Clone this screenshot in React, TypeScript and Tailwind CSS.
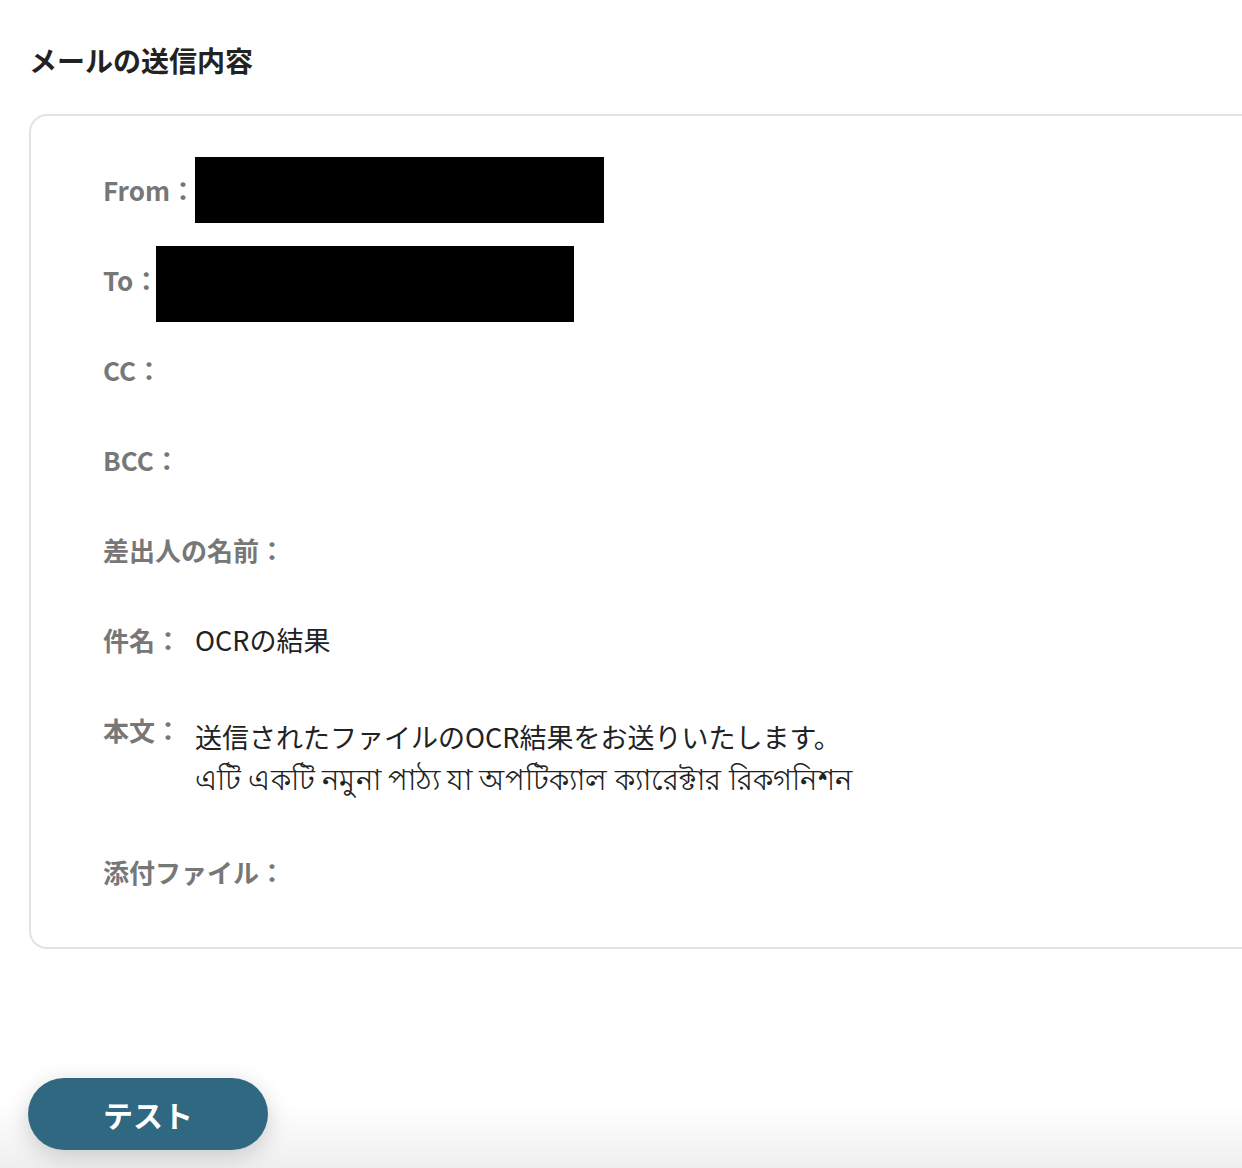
import React from "react";

const labelCls = "text-[26px] leading-[40px] font-semibold text-[#777777] whitespace-nowrap";
const valueCls = "text-[27px] leading-[40px] text-[#222222]";

function Row({ label, children }: { label: string; children?: React.ReactNode }) {
    return (
        <div className="flex h-[40px] items-center">
            <span className={labelCls}>{label}</span>
            {children}
        </div>
    );
}

export default function App() {
    return (
        <div
            className="flex h-[1168px] w-full flex-col overflow-hidden bg-white"
            style={{ fontFamily: '"Noto Sans CJK JP", "Noto Sans", sans-serif' }}
        >
            <div className="pl-[29px] pt-[40px]">
                <h2 className="text-[28px] leading-[40px] font-bold text-[#222222]">メールの送信内容</h2>

                <div className="mt-[34px] mr-[-60px] rounded-[18px] border-2 border-[#e3e3e3] pb-[55px] pl-[72px] pt-[54px]">
                    <div className="flex flex-col gap-[50px]">
                        <Row label="From：">
                            <span className="ml-[-1px] block h-[66px] w-[409px] bg-black" />
                        </Row>
                        <Row label="To：">
                            <span className="ml-[-3px] mt-[8px] block h-[76px] w-[418px] bg-black" />
                        </Row>
                        <Row label="CC：" />
                        <Row label="BCC：" />
                        <Row label="差出人の名前：" />
                        <Row label="件名：">
                            <span className={`${valueCls} ml-[14px]`}>OCRの結果</span>
                        </Row>
                        <div className="flex items-start">
                            <span className={labelCls}>本文：</span>
                            <div className="ml-[14px] mt-[6px] pb-[4px] leading-[41px] text-[#222222]">
                                <div className="text-[27px]">送信されたファイルのOCR結果をお送りいたします。</div>
                                <div className="text-[29px] tracking-[0.3px]">এটি একটি নমুনা পাঠ্য যা অপটিক্যাল ক্যারেক্টার রিকগনিশন</div>
                            </div>
                        </div>
                        <Row label="添付ファイル：" />
                    </div>
                </div>
            </div>

            <div className="mt-auto h-[128px] bg-gradient-to-b from-white via-white to-[#efefef] pl-[28px] pt-[38px]">
                <button
                    type="button"
                    className="h-[72px] w-[240px] rounded-full bg-[#2f6880] text-[30px] font-bold text-white shadow-[0_6px_24px_rgba(0,0,0,0.18)]"
                >
                    テスト
                </button>
            </div>
        </div>
    );
}
